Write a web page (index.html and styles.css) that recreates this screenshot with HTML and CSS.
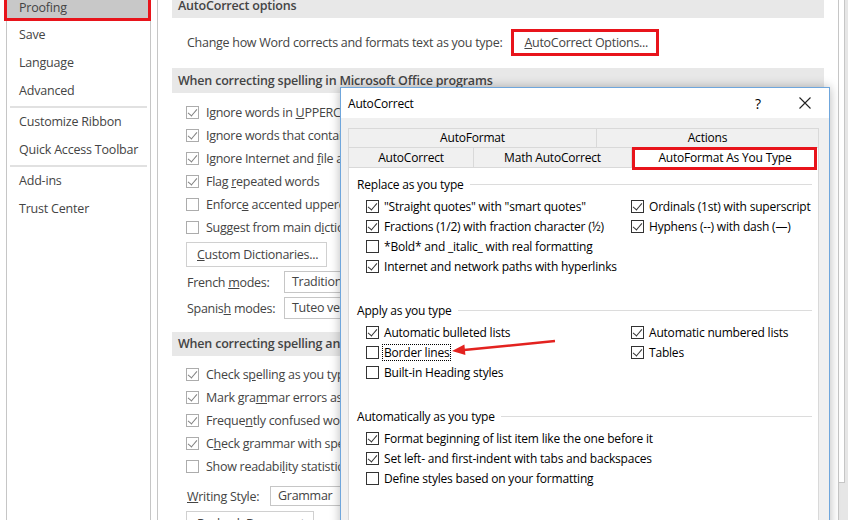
FILE: index.html
```html
<!DOCTYPE html>
<html>
<head>
    <meta charset="UTF-8">
    <title>Word Options - Proofing</title>
    <link rel="stylesheet" href="styles.css">
</head>
<body>
    <div class="app">
        <div class="nav">
            <div class="nav-item active">Proofing</div>
            <div class="nav-item">Save</div>
            <div class="nav-item">Language</div>
            <div class="nav-item">Advanced</div>
            <div class="nav-sep"></div>
            <div class="nav-item">Customize Ribbon</div>
            <div class="nav-item">Quick Access Toolbar</div>
            <div class="nav-sep"></div>
            <div class="nav-item">Add-ins</div>
            <div class="nav-item">Trust Center</div>
        </div>

        <div class="main">
            <div class="band band-first">AutoCorrect options</div>
            <div class="ac-row">
                <span>Change how Word corrects and formats text as you type:</span>
                <span class="hl"><span class="btn btn-ac"><u>A</u>utoCorrect Options...</span></span>
            </div>

            <div class="band">When correcting spelling in Microsoft Office programs</div>
            <div class="opts">
                <div class="opt"><span class="cb on"></span><span>Ignore words in <u>U</u>PPERCASE</span></div>
                <div class="opt"><span class="cb on"></span><span>Ignore words that contain numbers</span></div>
                <div class="opt"><span class="cb on"></span><span>Ignore Internet and <u>f</u>ile addresses</span></div>
                <div class="opt"><span class="cb on"></span><span>Flag <u>r</u>epeated words</span></div>
                <div class="opt"><span class="cb"></span><span>Enforc<u>e</u> accented uppercase in French</span></div>
                <div class="opt"><span class="cb"></span><span>Suggest from main d<u>i</u>ctionary only</span></div>
            </div>
            <div class="btn btn-dict"><span><u>C</u>ustom Dictionaries...</span></div>
            <div class="mode-row">
                <span class="mode-label">French <u>m</u>odes:</span>
                <span class="select">Traditional and new spellings</span>
            </div>
            <div class="mode-row">
                <span class="mode-label">Spanis<u>h</u> modes:</span>
                <span class="select">Tuteo verb forms only</span>
            </div>

            <div class="band band-spell">When correcting spelling and grammar in Word</div>
            <div class="opts opts-spell">
                <div class="opt"><span class="cb on"></span><span>Check s<u>p</u>elling as you type</span></div>
                <div class="opt"><span class="cb on"></span><span>Mark gra<u>m</u>mar errors as you type</span></div>
                <div class="opt"><span class="cb on"></span><span>Freque<u>n</u>tly confused words</span></div>
                <div class="opt"><span class="cb on"></span><span>C<u>h</u>eck grammar with spelling</span></div>
                <div class="opt"><span class="cb"></span><span>Show readabi<u>l</u>ity statistics</span></div>
            </div>
            <div class="mode-row style-row">
                <span class="mode-label style-label"><u>W</u>riting Style:</span>
                <span class="select">Grammar</span>
            </div>
            <div class="btn btn-recheck">Recheck Document</div>
        </div>

        <div class="scroll"><div class="thumb"></div></div>
    </div>

    <div class="dialog">
        <div class="dlg-title">
            <span>AutoCorrect</span>
            <span class="dlg-help">?</span>
            <span class="dlg-close">
                <svg width="12" height="12" viewBox="0 0 12 12"><path d="M0.5 0.5 L11.5 11.5 M11.5 0.5 L0.5 11.5" stroke="#222" stroke-width="1.1" fill="none"/></svg>
            </span>
        </div>
        <div class="dlg-body">
            <div class="tabs-row tabs-back">
                <div class="tab tab-af">AutoFormat</div>
                <div class="tab tab-last">Actions</div>
            </div>
            <div class="tabs-row tabs-front">
                <div class="tab tab-ac">AutoCorrect</div>
                <div class="tab tab-math">Math AutoCorrect</div>
                <div class="tab tab-last tab-sel">AutoFormat As You Type</div>
            </div>
            <div class="panel">
                <div class="grp-head">Replace as you type</div>
                <div class="grp-items">
                    <div class="col">
                        <div class="chk"><span class="dcb on"></span><span>"Straight quotes" with "smart quotes"</span></div>
                        <div class="chk"><span class="dcb on"></span><span>Fractions (1/2) with fraction character (½)</span></div>
                        <div class="chk"><span class="dcb"></span><span>*Bold* and _italic_ with real formatting</span></div>
                        <div class="chk"><span class="dcb on"></span><span>Internet and network paths with hyperlinks</span></div>
                    </div>
                    <div class="col">
                        <div class="chk"><span class="dcb on"></span><span>Ordinals (1st) with superscript</span></div>
                        <div class="chk"><span class="dcb on"></span><span>Hyphens (--) with dash (—)</span></div>
                    </div>
                </div>

                <div class="grp-head">Apply as you type</div>
                <div class="grp-items">
                    <div class="col">
                        <div class="chk"><span class="dcb on"></span><span>Automatic bulleted lists</span></div>
                        <div class="chk"><span class="dcb"></span><span class="focus">Border lines</span></div>
                        <div class="chk"><span class="dcb"></span><span>Built-in Heading styles</span></div>
                    </div>
                    <div class="col">
                        <div class="chk"><span class="dcb on"></span><span>Automatic numbered lists</span></div>
                        <div class="chk"><span class="dcb on"></span><span>Tables</span></div>
                    </div>
                </div>

                <div class="grp-head">Automatically as you type</div>
                <div class="grp-items">
                    <div class="col">
                        <div class="chk"><span class="dcb on"></span><span>Format beginning of list item like the one before it</span></div>
                        <div class="chk"><span class="dcb on"></span><span>Set left- and first-indent with tabs and backspaces</span></div>
                        <div class="chk"><span class="dcb"></span><span>Define styles based on your formatting</span></div>
                    </div>
                </div>
            </div>
        </div>
    </div>

    <!-- red annotation arrow -->
    <svg class="arrow" width="860" height="520" viewBox="0 0 860 520">
        <line x1="555" y1="341" x2="464" y2="350" stroke="#e3221f" stroke-width="2.5"/>
        <polygon points="452,351 465.4,355 464.4,344.6" fill="#e3221f"/>
    </svg>
</body>
</html>
```

FILE: styles.css
```css
* {
    margin: 0;
    padding: 0;
    box-sizing: border-box;
}

body {
    width: 860px;
    height: 520px;
    overflow: hidden;
    position: relative;
    background: #ffffff;
    font-family: "Open Sans", "Noto Sans", sans-serif;
    font-size: 12.5px;
    letter-spacing: -0.28px;
    color: #444444;
}

.app {
    display: flex;
    height: 520px;
}

/* left navigation */
.nav {
    width: 145px;
    flex-shrink: 0;
    margin: 0 6px;
    border-left: 1px solid #c6c6c6;
    border-right: 1px solid #c6c6c6;
}

.nav-item {
    height: 28px;
    line-height: 28px;
    padding-left: 12px;
    white-space: nowrap;
    letter-spacing: -0.2px;
}

.nav-item.active {
    width: 147px;
    height: 27px;
    line-height: 21px;
    margin: -6px 0 0 -3px;
    border: 3px solid #e8141b;
    background: #c8c8c8;
}

.nav-sep {
    height: 2px;
    margin: 1px 3px 0;
    background: #e1e1e1;
}

/* options page */
.main {
    flex: 1;
    min-width: 0;
    overflow: hidden;
    border-left: 1px solid #c6c6c6;
    padding: 0 14px;
}

.band {
    height: 25px;
    line-height: 25px;
    padding-left: 6px;
    background: #e8e8e8;
    font-weight: 600;
    letter-spacing: -0.2px;
    white-space: nowrap;
}

.band-first {
    margin-top: -7px;
}

.ac-row {
    height: 50px;
    padding: 0 0 2px 15px;
    display: flex;
    align-items: center;
    white-space: nowrap;
}

.hl {
    display: flex;
    margin-left: 9px;
    border: 3px solid #e8141b;
}

.btn {
    display: flex;
    align-items: center;
    height: 25px;
    padding: 0 10px;
    background: #ffffff;
    border: 1px solid #d0d0d0;
    white-space: nowrap;
}

.btn-ac {
    height: 21px;
    border: none;
    padding: 0 8px 0 10px;
}

.opts {
    padding-top: 8px;
}

.opt {
    display: flex;
    align-items: center;
    height: 23px;
    padding-left: 14px;
    white-space: nowrap;
}

.cb {
    position: relative;
    flex-shrink: 0;
    width: 13px;
    height: 13px;
    margin-right: 7px;
    border: 1px solid #acacac;
    background: #ffffff;
}

.cb.on::after {
    content: "";
    position: absolute;
    left: 3px;
    top: 0;
    width: 4px;
    height: 8px;
    border: solid #808080;
    border-width: 0 1px 1px 0;
    transform: rotate(40deg);
}

.btn-dict {
    width: 141px;
    margin: 3px 0 0 14px;
}

.mode-row {
    display: flex;
    align-items: center;
    height: 22px;
    margin-top: 4px;
    padding-left: 15px;
    white-space: nowrap;
}

.mode-label {
    width: 97px;
    flex-shrink: 0;
}

.select {
    flex: 1;
    height: 22px;
    line-height: 20px;
    padding-left: 7px;
    border: 1px solid #c6c6c6;
}

.band-spell {
    margin-top: 13px;
    height: 24px;
    line-height: 24px;
}

.opts-spell {
    padding-top: 7px;
}

.style-row {
    margin-top: 8px;
    height: 20px;
}

.style-row .select {
    height: 20px;
    line-height: 18px;
}

.style-label {
    width: 83px;
}

.btn-recheck {
    width: 128px;
    margin: 5px 0 0 14px;
}

.scroll {
    width: 10px;
    margin-right: 12px;
    background: #e6e6e6;
    border-left: 1px solid #c6c6c6;
}

.thumb {
    height: 483px;
    margin-right: 3px;
    background: #ffffff;
    border: 1px solid #c6c6c6;
    border-top: none;
    border-left: none;
}

/* AutoCorrect dialog */
.dialog {
    position: absolute;
    left: 340px;
    top: 87px;
    width: 490px;
    height: 450px;
    display: flex;
    flex-direction: column;
    background: #f0f0f0;
    border: 1px solid #6fa6dc;
    box-shadow: 0 0 10px rgba(0, 0, 0, 0.28);
    font-size: 12px;
    letter-spacing: -0.2px;
    color: #000000;
}

.dlg-title {
    height: 30px;
    display: flex;
    align-items: center;
    padding-left: 7px;
    background: #ffffff;
}

.dlg-help {
    width: 20px;
    margin-left: auto;
    text-align: center;
    font-size: 14px;
}

.dlg-close {
    width: 26px;
    margin: 0 11px 0 24px;
    display: flex;
    justify-content: center;
}

.dlg-body {
    flex: 1;
    padding: 10px 10px 0 7px;
    display: flex;
    flex-direction: column;
}

.tabs-row {
    display: flex;
}

.tab {
    height: 19px;
    line-height: 18px;
    text-align: center;
    border: 1px solid #d9d9d9;
    border-bottom: none;
    border-right: none;
    white-space: nowrap;
}

.tab-last {
    flex: 1;
    border-right: 1px solid #d9d9d9;
}

.tab-af {
    width: 248px;
}

.tabs-front .tab {
    height: 20px;
    line-height: 20px;
}

.tab-ac {
    width: 125px;
}

.tab-math {
    width: 158px;
}

.tab-sel {
    position: relative;
    z-index: 1;
    height: 21px !important;
    margin-bottom: -1px;
    background: #ffffff;
}

.tab-sel::after {
    content: "";
    position: absolute;
    top: -1px;
    left: 0;
    right: 1px;
    bottom: -2px;
    border: 3px solid #e8141b;
}

.panel {
    flex: 1;
    padding: 6px 6px 0 8px;
    background: #ffffff;
    border: 1px solid #d9d9d9;
}

.grp-head {
    display: flex;
    align-items: center;
    height: 20px;
    white-space: nowrap;
}

.grp-head::after {
    content: "";
    flex: 1;
    height: 1px;
    margin-left: 6px;
    background: #dcdcdc;
}

.grp-items {
    display: grid;
    grid-template-columns: 265px 1fr;
    margin: 2px 0 24px 9px;
}

.col {
    display: flex;
    flex-direction: column;
}

.chk {
    display: flex;
    align-items: center;
    height: 20px;
    white-space: nowrap;
}

.dcb {
    position: relative;
    flex-shrink: 0;
    width: 13px;
    height: 13px;
    margin-right: 5px;
    border: 1px solid #333333;
    background: #ffffff;
}

.dcb.on::after {
    content: "";
    position: absolute;
    left: 3px;
    top: 0;
    width: 4px;
    height: 8px;
    border: solid #333333;
    border-width: 0 1px 1px 0;
    transform: rotate(40deg);
}

.focus {
    margin-left: -2px;
    padding: 0 1px;
    line-height: 15px;
    border: 1px dotted #000000;
}

.arrow {
    position: absolute;
    left: 0;
    top: 0;
    pointer-events: none;
}
```
